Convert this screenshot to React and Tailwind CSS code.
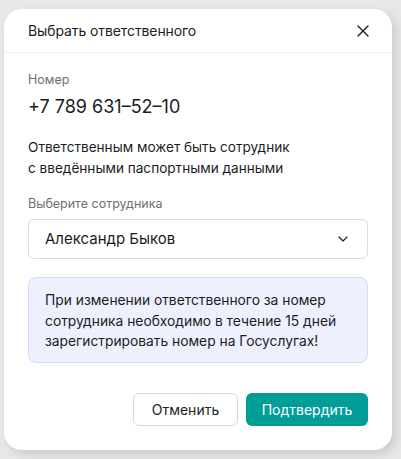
import { ChevronDown, X } from 'lucide-react'

export default function App() {
  return (
    <div className="w-[401px] h-[459px] bg-[#e7e7e7] pt-[9px] pl-[4px] font-['Inter',sans-serif] text-[#1c1c1e]">
      <div className="w-[388px] h-[441px] bg-white rounded-[18px] shadow-[4px_4px_10px_rgba(0,0,0,0.12)] flex flex-col">
        {/* Header */}
        <div className="h-[44px] flex items-center justify-between pl-6 pr-[17px] border-b border-[#ececf1]">
          <span className="text-[14px] leading-5 tracking-[-0.1px]">Выбрать ответственного</span>
          <button className="w-6 h-6 flex items-center justify-center">
            <X className="w-5 h-5 text-[#222]" strokeWidth={1.6} />
          </button>
        </div>

        {/* Body */}
        <div className="flex flex-col px-6 pt-[19px] flex-1">
          <div className="text-[12.5px] leading-4 text-[#6f6f73]">Номер</div>
          <div className="mt-[7px] text-[18px] leading-6">+7 789 631–52–10</div>

          <p className="mt-[18px] text-[13.6px] leading-[21px]">
            Ответственным может быть сотрудник<br />с введёнными паспортными данными
          </p>

          <div className="mt-[17px] text-[12.5px] leading-4 text-[#6f6f73]">Выберите сотрудника</div>
          <button className="mt-[7px] h-10 w-full flex items-center justify-between pl-4 pr-[16px] border border-[#dcdce3] rounded-md bg-white">
            <span className="text-[15px]">Александр Быков</span>
            <ChevronDown className="w-4 h-4 text-[#222]" strokeWidth={1.8} />
          </button>

          <div className="mt-[18px] bg-[#eef1fd] border border-[#d5dcfa] rounded-lg pl-4 pr-3 pt-[12px] pb-[10px] text-[13.8px] leading-[20.5px]">
            При изменении ответственного за номер сотрудника необходимо в течение 15 дней зарегистрировать номер на Госуслугах!
          </div>

          <div className="mt-auto mb-6 flex justify-end gap-2">
            <button className="h-[33px] w-[105px] border border-[#d6d6de] rounded-md text-[14px] text-[#222]">
              Отменить
            </button>
            <button className="h-[33px] w-[122px] bg-[#019e98] rounded-md text-[14px] text-white">
              Подтвердить
            </button>
          </div>
        </div>
      </div>
    </div>
  )
}
